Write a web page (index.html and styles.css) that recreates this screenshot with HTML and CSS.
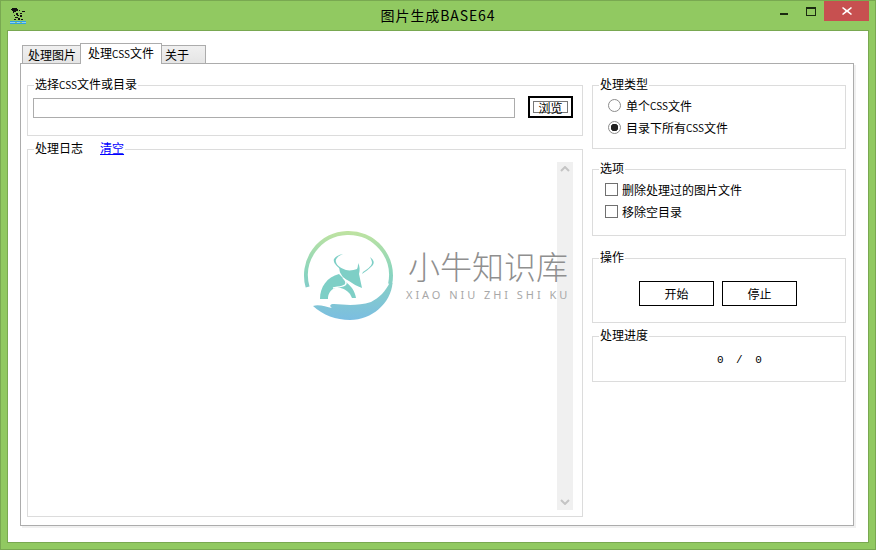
FILE: index.html
```html
<!DOCTYPE html>
<html lang="zh-CN">
<head>
    <meta charset="UTF-8">
    <title>图片生成BASE64</title>
    <link rel="stylesheet" href="styles.css">
</head>
<body>
    <div class="window">
        <div class="titlebar">
            <svg class="app-icon" width="16" height="16" viewBox="0 0 16 16" shape-rendering="crispEdges">
                <path fill="#111" d="M2 0h5v1h1v2H6v1H4v1H3V3H2V2H1V1h1zM9 2h1v1H9zM12 3h3v1h-3zM6 5h2v2h1v1H7V7H6zM10 5h2v1h-2zM4 7h1v1H4zM10 7h2v2h-2zM5 9h3v1H5zM8 10h2v2H8zM4 11h2v1H4zM11 11h2v1h-2z"/>
                <path fill="#2f9fe0" d="M0 13h16v1H0z"/>
                <path fill="#8fd3f0" d="M0 14h5v1H0zM7 14h3v1H7zM12 14h4v1h-4z"/>
                <path fill="#2f9fe0" d="M0 15h16v1H0z"/>
            </svg>
            <div class="title">图片生成BASE64</div>
            <div class="controls">
                <span class="ctl-min"></span>
                <span class="ctl-max"></span>
                <span class="ctl-close">
                    <svg width="10" height="8" viewBox="0 0 10 8"><path d="M1 0l4 3 4-3 1 1-3.500 3 3.500 3-1 1-4-3-4 3-1-1 3.500-3L0 1z" fill="#fff"/></svg>
                </span>
            </div>
        </div>

        <div class="client">
            <div class="tabs">
                <div class="tab tab-image">处理图片</div>
                <div class="tab tab-css active">处理<span class="latin">CSS</span>文件</div>
                <div class="tab tab-about">关于</div>
            </div>
            <div class="pane">
                <div class="col-left">
                    <fieldset class="group group-select">
                        <legend>选择<span class="latin">CSS</span>文件或目录</legend>
                        <div class="select-row">
                            <input type="text" class="path-input">
                            <button class="browse"><span>浏览</span></button>
                        </div>
                    </fieldset>
                    <fieldset class="group group-log">
                        <legend>处理日志<a href="#" class="clear-link">清空</a></legend>
                        <div class="log-body">
                            <div class="log-text"></div>
                            <div class="scrollbar">
                                <svg width="10" height="6" viewBox="0 0 10 6"><path d="M1 5l4-4 4 4" fill="none" stroke="#c4c4c4" stroke-width="2"/></svg>
                                <svg width="10" height="6" viewBox="0 0 10 6"><path d="M1 1l4 4 4-4" fill="none" stroke="#c4c4c4" stroke-width="2"/></svg>
                            </div>
                        </div>
                    </fieldset>
                </div>

                <div class="col-right">
                    <fieldset class="group group-type">
                        <legend>处理类型</legend>
                        <label class="opt"><input type="radio" name="type">单个<span class="latin">CSS</span>文件</label>
                        <label class="opt"><input type="radio" name="type" checked>目录下所有<span class="latin">CSS</span>文件</label>
                    </fieldset>
                    <fieldset class="group group-options">
                        <legend>选项</legend>
                        <label class="opt"><input type="checkbox">删除处理过的图片文件</label>
                        <label class="opt"><input type="checkbox">移除空目录</label>
                    </fieldset>
                    <fieldset class="group group-actions">
                        <legend>操作</legend>
                        <div class="action-row">
                            <button class="action">开始</button>
                            <button class="action">停止</button>
                        </div>
                    </fieldset>
                    <fieldset class="group group-progress">
                        <legend>处理进度</legend>
                        <div class="progress-row">
                            <span>0</span><span>/</span><span>0</span>
                        </div>
                    </fieldset>
                </div>
            </div>
        </div>

        <div class="watermark">
            <svg width="100" height="100" viewBox="0 0 100 100">
                <defs>
                    <linearGradient id="wm" gradientUnits="userSpaceOnUse" x1="0" y1="6" x2="0" y2="96">
                        <stop offset="0" stop-color="#bfe3a0"/>
                        <stop offset="0.45" stop-color="#8ad5bd"/>
                        <stop offset="1" stop-color="#7bbde2"/>
                    </linearGradient>
                </defs>
                <path d="M7.600 62A42.500 42.500 0 1 1 90.100 59" fill="none" stroke="url(#wm)" stroke-width="4"/>
                <path fill="url(#wm)" d="M13 81C19 79 26 82 32 83C29 81 30 79 34 79C46 80 58 81 71 77C79 73 86 66 90 57L92.500 58C91 78 72 95 50 95C36 95 23 90 13 81Z"/>
                <g fill="#7ecfc6">
                    <path d="M43 29C38 31 35 34 36 37C37 41 41 43 46 45C50 46 54 45 57 44C58 42 58 40 58 38C60 41 60 45 59 49C60 54 61 58 62 63C57 61 53 59 49 56C45 54 42 52 41 49C39 46 40 45 39 43C35 40 33 36 34 34C36 31 39 30 43 29Z"/>
                    <path d="M39 49C27 52 20 62 20 74L28 74C28 69 30 66 33 64C39 61 46 64 50 69L52 73L56 73C55 66 51 61 47 58L42 52Z"/>
                    <path d="M70 32C74 35 75 38 72 41C69 44 65 47 62 49L63 47C67 44 71 42 72 38C72 36 71 34 70 32Z"/>
                </g>
                <path d="M43 53C46 55 47 58 45 60C42 62 37 62 33 63" fill="none" stroke="#fff" stroke-width="1.500"/>
            </svg>
            <div class="wm-text">
                <div class="wm-cn">小牛知识库</div>
                <div class="wm-en">XIAO NIU ZHI SHI KU</div>
            </div>
        </div>
    </div>
</body>
</html>
```

FILE: styles.css
```css
* {
    box-sizing: border-box;
}
body {
    margin: 0;
    font-family: "Noto Sans CJK SC", "Liberation Sans", sans-serif;
    font-size: 12px;
    color: #000;
}
.latin {
    font-size: 10px;
}
.window {
    position: relative;
    width: 876px;
    height: 550px;
    display: flex;
    flex-direction: column;
    background-color: #91c961;
    border: 1px solid #79a851;
}
.titlebar {
    height: 29px;
    flex: none;
    display: grid;
    grid-template-columns: 1fr auto 1fr;
}
.app-icon {
    margin: 7px 0 0 9px;
}
.title {
    font-size: 14px;
    line-height: 28px;
    letter-spacing: 0.9px;
}
.controls {
    display: flex;
    justify-content: flex-end;
    align-items: flex-start;
}
.ctl-min {
    width: 8px;
    height: 2px;
    margin: 12px 18px 0 0;
    background-color: #1a2a10;
}
.ctl-max {
    width: 10px;
    height: 9px;
    margin: 6px 8px 0 0;
    border: 1px solid #1a2a10;
    border-top-width: 2px;
}
.ctl-close {
    width: 45px;
    height: 20px;
    margin-right: 6px;
    display: flex;
    align-items: center;
    justify-content: center;
    background-color: #c75050;
}

.client {
    flex: 1;
    margin: 0 6px 6px;
    padding: 12px 14px 16px 12px;
    display: flex;
    flex-direction: column;
    background-color: #fff;
    border: 1px solid #79a851;
}
.tabs {
    position: relative;
    z-index: 1;
    height: 21px;
    flex: none;
    display: flex;
    align-items: flex-end;
    margin: 0 0 -1px 2px;
}
.tab {
    height: 19px;
    padding-left: 5px;
    line-height: 18px;
    border: 1px solid #acacac;
    background: linear-gradient(#f0f0f0, #e5e5e5);
}
.tab.active {
    position: relative;
    height: 21px;
    padding-left: 7px;
    background: #fff;
    border-bottom: none;
}
.tab-image {
    width: 59px;
}
.tab-css {
    width: 82px;
    margin-left: -1px;
}
.tab-about {
    width: 45px;
    margin-left: -1px;
    padding-left: 3px;
}
.pane {
    flex: 1;
    display: flex;
    gap: 9px;
    padding: 14px 0 0 6px;
    border: 1px solid #acacac;
    box-shadow: 2px 2px 0 #f0f0f0;
}

.col-left {
    width: 556px;
    display: flex;
    flex-direction: column;
    gap: 6px;
    padding-bottom: 8px;
}
.col-right {
    width: 254px;
    display: flex;
    flex-direction: column;
}
.group {
    min-width: 0;
    margin: 0;
    padding: 0;
    border: 1px solid #dcdcdc;
}
.group legend {
    height: 14px;
    margin-left: 6px;
    padding: 0 1px;
    line-height: 12px;
}
.group-select {
    height: 58px;
}
.select-row {
    display: flex;
    align-items: flex-end;
    padding: 4px 0 0 5px;
}
.path-input {
    width: 482px;
    height: 20px;
    margin-right: 13px;
    border: 1px solid #acacac;
    outline: none;
}
.browse {
    width: 45px;
    height: 22px;
    padding: 3px;
    font: inherit;
    line-height: 1;
    background: #fff;
    border: 2px solid #000;
}
.browse span {
    display: block;
    height: 12px;
    line-height: 12px;
    border: 1px solid #777;
}

.group-log {
    flex: 1;
    display: flex;
    flex-direction: column;
}
.clear-link {
    margin-left: 17px;
    color: #00f;
}
.log-body {
    height: 355px;
    display: flex;
    padding: 6px 9px 0 0;
}
.log-text {
    flex: 1;
}
.scrollbar {
    width: 16px;
    height: 348px;
    padding: 4px 0 5px;
    display: flex;
    flex-direction: column;
    justify-content: space-between;
    align-items: center;
    background-color: #f0f0f0;
}

.group-type {
    height: 71px;
    padding-top: 2px;
}
.group-options {
    height: 74px;
    margin-top: 13px;
    padding-top: 2px;
}
.group-actions {
    height: 72px;
    margin-top: 15px;
}
.group-progress {
    height: 53px;
    margin-top: 6px;
}
.opt {
    height: 22px;
    display: flex;
    align-items: center;
}
.opt input {
    appearance: none;
    width: 13px;
    height: 13px;
    flex: none;
    margin: 0;
    background: #fff;
    border: 1px solid #707070;
}
.group-type .opt {
    padding-left: 15px;
}
.group-type .opt input {
    margin-right: 5px;
    border-color: #8c8c8c;
    border-radius: 50%;
}
.group-type .opt input:checked {
    background: radial-gradient(circle, #222 3.5px, #fff 4px);
}
.group-options .opt {
    padding-left: 12px;
}
.group-options .opt input {
    margin-right: 4px;
}
.action-row {
    display: flex;
    gap: 8px;
    padding: 16px 0 0 46px;
}
.action {
    width: 75px;
    height: 25px;
    padding: 0;
    font: inherit;
    background: #fff;
    border: 1px solid #000;
}
.progress-row {
    display: flex;
    gap: 12.500px;
    padding: 11px 0 0 124px;
    font-family: "Liberation Mono", monospace;
    font-size: 11px;
}

/* site watermark baked over the screenshot */
.watermark {
    position: absolute;
    left: 299px;
    top: 224px;
    display: flex;
    pointer-events: none;
}
.wm-text {
    margin: 21px 0 0 8px;
}
.wm-cn {
    font-size: 32px;
    line-height: 38px;
    color: #8f8f8f;
    font-weight: 300;
}
.wm-en {
    margin: 4px 0 0 -2px;
    font-family: "Noto Sans", sans-serif;
    font-size: 11px;
    line-height: 14px;
    letter-spacing: 2.950px;
    white-space: nowrap;
    color: #a8a8a8;
}
```
